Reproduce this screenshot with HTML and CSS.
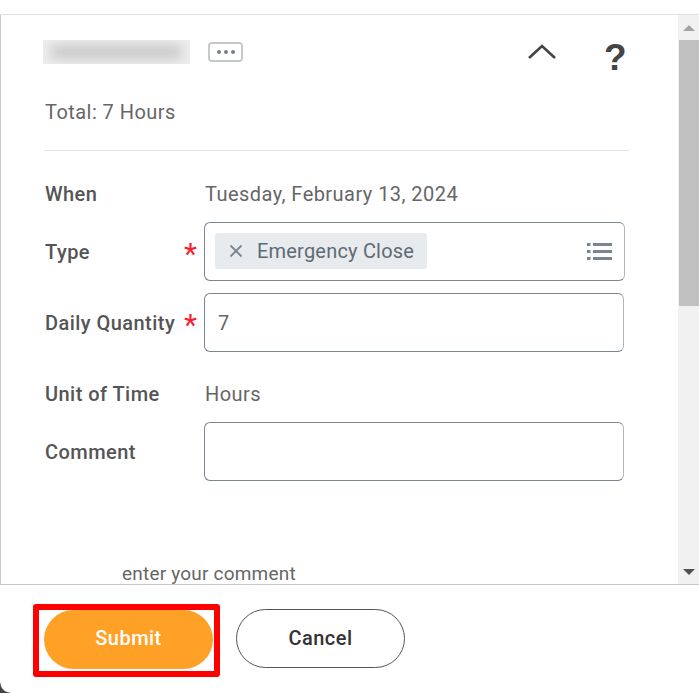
FILE: index.html
```html
<!DOCTYPE html>
<html lang="en">
<head>
    <meta charset="UTF-8">
    <meta name="viewport" content="width=device-width, initial-scale=1.0">
    <title>Enter Time</title>
    <link rel="stylesheet" href="styles.css">
</head>
<body>
    <div class="top-strip"></div>

    <div class="panel">
        <div class="content">
            <div class="title-row">
                <div class="blurred-name"></div>
                <button class="more-btn" aria-label="More">
                    <span></span><span></span><span></span>
                </button>
                <svg class="chevron" width="30" height="16" viewBox="0 0 30 16">
                    <path d="M2 14 L15 2 L28 14" fill="none" stroke="#444" stroke-width="2.6"/>
                </svg>
                <span class="help">?</span>
            </div>

            <p class="total">Total: 7 Hours</p>
            <hr class="divider">

            <div class="form">
                <div class="row row-text">
                    <label>When</label>
                    <span class="value">Tuesday, February 13, 2024</span>
                </div>
                <div class="row row-type">
                    <label>Type</label>
                    <span class="req">*</span>
                    <div class="field field-type">
                        <span class="pill">
                            <svg width="14" height="14" viewBox="0 0 14 14">
                                <path d="M1.5 1.5 L12.5 12.5 M12.5 1.5 L1.5 12.5" stroke="#7b858f" stroke-width="1.8"/>
                            </svg>
                            Emergency Close
                        </span>
                        <svg class="list-icon" width="25" height="18" viewBox="0 0 25 18">
                            <path d="M0 1h3.5v3H0zM6 1h19v3H6zM0 8h3.5v3H0zM6 8h19v3H6zM0 15h3.500v3H0zM6 15h19v3H6z" fill="#7b858f"/>
                        </svg>
                    </div>
                </div>
                <div class="row row-qty">
                    <label>Daily Quantity</label>
                    <span class="req">*</span>
                    <div class="field field-qty">7</div>
                </div>
                <div class="row row-unit">
                    <label>Unit of Time</label>
                    <span class="value">Hours</span>
                </div>
                <div class="row row-comment">
                    <label>Comment</label>
                    <div class="field field-comment"></div>
                </div>
            </div>

            <p class="hint">enter your comment</p>
        </div>

        <div class="scrollbar">
            <div class="arrow arrow-up"></div>
            <div class="thumb"></div>
            <div class="track"></div>
            <div class="arrow arrow-down"></div>
        </div>
    </div>

    <footer>
        <div class="highlight">
            <button class="submit">Submit</button>
        </div>
        <button class="cancel">Cancel</button>
    </footer>
</body>
</html>
```

FILE: styles.css
```css
* {
    padding: 0;
    margin: 0;
    box-sizing: border-box;
}

body {
    width: 699px;
    height: 693px;
    background: #fff;
    color: #5e6a75;
    font-family: Roboto, "Liberation Sans", sans-serif;
    font-size: 20px;
    letter-spacing: .45px;
    display: flex;
    flex-direction: column;
    overflow: hidden;
}

.top-strip {
    height: 15px;
    border-bottom: 1px solid #e0e0e8;
}

.panel {
    display: flex;
    height: 570px;
    border-left: 1px solid #ccc;
    border-bottom: 1px solid #c8c8c8;
}

.content {
    flex: 1;
    overflow: hidden;
    padding: 0 49px 0 43px;
}

/* title row */
.title-row {
    display: flex;
    align-items: center;
    height: 24px;
    margin-top: 25px;
}

.blurred-name {
    position: relative;
    width: 147px;
    height: 24px;
    margin-left: -1px;
    background: #eeeeee;
    overflow: hidden;
}

.blurred-name::before {
    content: "";
    position: absolute;
    inset: 5px 8px;
    background: #c9c9c9;
    filter: blur(6px);
}

.more-btn {
    width: 35px;
    height: 20px;
    margin-left: 18px;
    background: #fff;
    border: 2px solid #c6c9cc;
    border-radius: 4px;
    display: flex;
    align-items: center;
    justify-content: center;
    gap: 3px;
}

.more-btn span {
    width: 4px;
    height: 4px;
    border-radius: 50%;
    background: #7b7f85;
}

.chevron {
    margin-left: 284px;
}

.help {
    margin: 11px 0 0 47px;
    font-size: 37px;
    font-weight: 700;
    color: #444;
    line-height: 24px;
    font-family: "Liberation Sans", sans-serif;
}

.total {
    margin: 36px 0 0 1px;
    line-height: 24px;
    color: #666;
}

.divider {
    border: none;
    border-top: 1px solid #e2e2ea;
    margin-top: 26px;
}

/* form */
.form {
    margin-top: 31px;
}

.row {
    display: flex;
    align-items: center;
    padding-left: 1px;
}

.row label {
    width: 159px;
    font-weight: 500;
    color: #555;
}

.value {
    margin-left: 1px;
    color: #666;
}

.req {
    width: 0;
    margin-left: -20px;
    margin-right: 20px;
    color: #f5202e;
    font-size: 30px;
    line-height: 24px;
    height: 20px;
}

.row-text {
    height: 24px;
}

.row-type {
    margin-top: 16px;
}

.row-qty {
    margin-top: 12px;
}

.row-unit {
    margin-top: 30px;
    height: 24px;
}

.row-comment {
    margin-top: 16px;
}

.field {
    width: 420px;
    height: 59px;
    border: 1px solid #7b858f;
    border-right-color: #b0b6bb;
    border-radius: 6px;
    background: #fff;
}

.field-type {
    width: 421px;
    display: flex;
    align-items: center;
    justify-content: space-between;
    padding: 0 12px 1px 10px;
}

.pill {
    display: flex;
    align-items: center;
    gap: 14px;
    height: 36px;
    padding: 0 13px 0 14px;
    background: #e8ebee;
    border-radius: 3px;
    color: #5e6a75;
    letter-spacing: .2px;
}

.field-qty {
    display: flex;
    align-items: center;
    padding-left: 13px;
    color: #666;
}

.hint {
    margin: 81px 0 0 78px;
    font-size: 19px;
    letter-spacing: .2px;
    line-height: 24px;
    color: #666;
}

/* scrollbar */
.scrollbar {
    width: 21px;
    background: #f1f1f1;
    display: flex;
    flex-direction: column;
}

.arrow {
    height: 25px;
    flex: none;
    display: flex;
    align-items: center;
    justify-content: center;
}

.arrow::before {
    content: "";
    border-left: 6px solid transparent;
    border-right: 6px solid transparent;
}

.arrow-up::before {
    border-bottom: 6px solid #a3a3a3;
}

.arrow-down::before {
    border-top: 6px solid #505050;
}

.thumb {
    height: 266px;
    margin-left: 1px;
    background: #c1c1c1;
    flex: none;
}

.track {
    flex: 1;
}

/* footer */
footer {
    flex: 1;
    display: flex;
    align-items: flex-start;
    gap: 16px;
    padding: 19px 0 0 33px;
    position: relative;
}

footer::before {
    content: "";
    position: absolute;
    left: 0;
    bottom: 0;
    width: 10px;
    height: 10px;
    background: radial-gradient(circle at 100% 0, transparent 9px, #444 10px);
}

.highlight {
    border: 6px solid #f00;
    border-radius: 3px;
    padding: 0 1px 2px 5px;
    height: 73px;
}

.submit, .cancel {
    width: 169px;
    height: 59px;
    border-radius: 30px;
    font-family: inherit;
    font-size: 20px;
    font-weight: 500;
    letter-spacing: .45px;
}

.submit {
    display: block;
    padding-bottom: 3px;
    background: #ffa126;
    border: none;
    color: #fff;
}

.cancel {
    padding-bottom: 1px;
    background: #fff;
    border: 1px solid #555;
    color: #333;
    margin-top: 5px;
}
```
